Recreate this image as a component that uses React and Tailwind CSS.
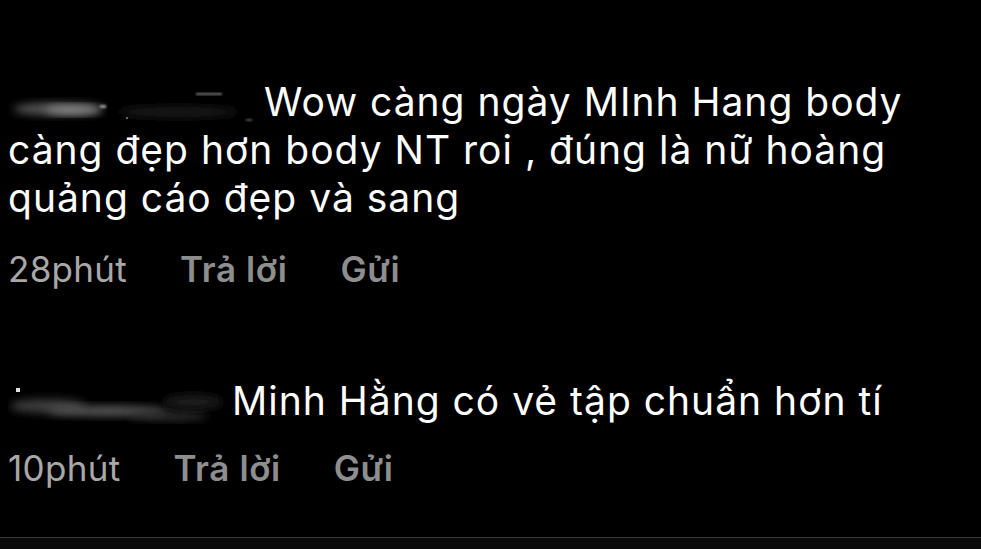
import React from "react";

function Blur({ w, variant }) {
  return (
    <svg width={w} height="40" viewBox={`0 0 ${w} 40`} className="inline-block align-middle">
      <defs>
        <filter id={`b${variant}`} x="-20%" y="-50%" width="140%" height="200%">
          <feGaussianBlur stdDeviation="4" />
        </filter>
        <filter id={`s${variant}`} x="-20%" y="-50%" width="140%" height="200%">
          <feGaussianBlur stdDeviation="1.2" />
        </filter>
      </defs>
      {variant === 1 ? (
        <g>
          <ellipse cx="50" cy="24" rx="45" ry="6" fill="#5a5a5a" filter="url(#b1)" />
          <ellipse cx="65" cy="25" rx="28" ry="4" fill="#8a8a8a" filter="url(#b1)" />
          <rect x="92" y="20" width="6" height="3" fill="#9a9a9a" filter="url(#s1)" />
          <rect x="188" y="8" width="26" height="2" fill="#777" filter="url(#s1)" />
          <ellipse cx="170" cy="27" rx="60" ry="5" fill="#1c1c1c" filter="url(#b1)" />
          <rect x="118" y="32" width="2" height="2" fill="#666" />
          <rect x="238" y="34" width="6" height="2" fill="#555" filter="url(#s1)" />
        </g>
      ) : (
        <g>
          <rect x="8" y="4" width="4" height="4" fill="#e0e0e0" />
          <ellipse cx="40" cy="22" rx="38" ry="7" fill="#3c3c3c" filter="url(#b2)" />
          <ellipse cx="100" cy="27" rx="60" ry="5" fill="#5c5c5c" filter="url(#b2)" />
          <ellipse cx="160" cy="32" rx="40" ry="4" fill="#333" filter="url(#b2)" />
          <ellipse cx="185" cy="18" rx="30" ry="7" fill="#1e1e1e" filter="url(#b2)" />
        </g>
      )}
    </svg>
  );
}

function Meta({ time }) {
  return (
    <div className="flex items-center gap-[53px] text-[35px] leading-[40px] text-[#a8a8a8]">
      <span className="tracking-[0.3px]">{time}</span>
      <span className="font-semibold text-[#8e8e8e] tracking-[0.6px]">Trả lời</span>
      <span className="font-semibold text-[#8e8e8e] tracking-[0.6px]">Gửi</span>
    </div>
  );
}

export default function App() {
  return (
    <div
      className="w-[981px] h-[549px] bg-black text-white flex flex-col overflow-hidden"
      style={{ fontFamily: "Inter, 'Noto Sans', sans-serif" }}
    >
      <div className="flex-1 flex flex-col pl-[8px] pt-[78px]">
        <div className="text-[39px] leading-[48px] tracking-[1px] text-white">
          <Blur w={256} variant={1} />
          Wow càng ngày MInh Hang body càng đẹp hơn body NT roi , đúng là nữ hoàng quảng cáo đẹp và sang
        </div>
        <div className="mt-[27px]">
          <Meta time="28phút" />
        </div>
        <div className="mt-[88px] text-[39px] leading-[48px] tracking-[1px] text-white">
          <Blur w={224} variant={2} />
          Minh Hằng có vẻ tập chuẩn hơn tí
        </div>
        <div className="mt-[23px]">
          <Meta time="10phút" />
        </div>
      </div>
      <div className="h-[12px] border-t border-[#3a3a3a] bg-[#0a0a0a]" />
    </div>
  );
}
